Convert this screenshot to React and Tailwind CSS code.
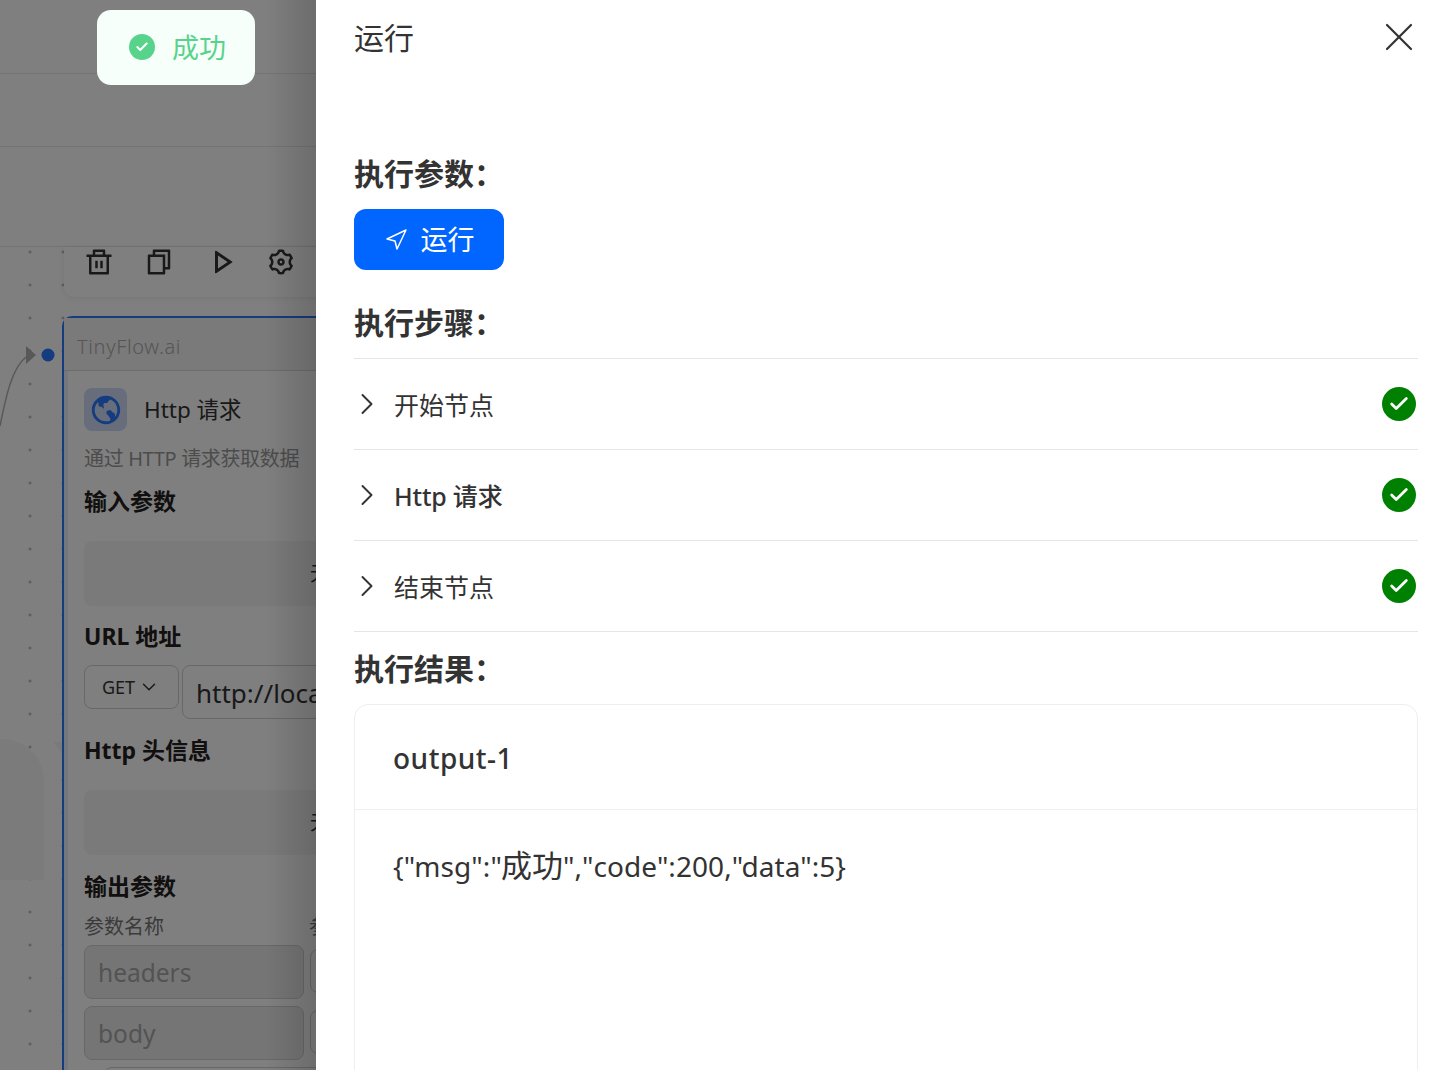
import { X, Navigation, ChevronRight, ChevronDown, Check } from "lucide-react";
import { RiDeleteBinLine, RiFileCopyLine, RiPlayLine, RiSettings3Line, RiEarthLine } from "react-icons/ri";

const fontStack = "font-['Noto_Sans','Noto_Sans_CJK_SC',sans-serif]";

const steps = [
  { name: "开始节点", weight: "" },
  { name: "Http 请求", weight: "font-medium tracking-[-0.2px]" },
  { name: "结束节点", weight: "" },
];

function FieldTitle({ children }) {
  return <div className="pt-[1px] h-[30px] text-[30px] leading-[30px] font-bold text-[#333]">{children}</div>;
}

function NodeLabel({ children, className }) {
  return <div className={`text-[23px] leading-[30px] font-bold text-[#24201c] ${className}`}>{children}</div>;
}

function EmptyBox() {
  return (
    <div className="h-[65px] w-[500px] rounded-[8px] bg-[#f5f5f5] flex items-center pl-[226px] text-[20px] text-[#333]">无</div>
  );
}

function Canvas() {
  return (
    <div className="relative w-[316px] h-[1070px] shrink-0 overflow-hidden bg-white">
      <div className="h-[74px] border-b border-[#e8e8e8]" />
      <div className="h-[73px] border-b border-[#e8e8e8]" />
      <div className="h-[100px] border-b border-[#e8e8e8]" />
      <div className="absolute left-0 right-0 top-[247px] bottom-0 bg-[#fefefe] bg-[radial-gradient(circle,#a6a6a6_1px,transparent_1.2px)] bg-[size:33px_33px] bg-[position:13.5px_-11.5px]" />

      <div className="absolute left-0 top-[739px] w-[44px] h-[141px] rounded-tr-[42px] bg-[#f7f7f8]" />
      <svg className="absolute left-[54px] top-[741px]" width="12" height="20" viewBox="0 0 12 20">
        <path d="M0 1H12V20Z" fill="#f3f4f6" />
      </svg>
      <svg className="absolute left-0 top-[340px]" width="60" height="100" viewBox="0 0 60 100" fill="none">
        <path d="M0 86C6 56 12 28 26 17" stroke="#b1b1b1" strokeWidth="1.5" />
        <path d="M26 6L36 15L26 24Z" fill="#b1b1b1" />
        <circle cx="48" cy="15" r="6.5" fill="#2878ff" />
      </svg>

      <div className="absolute left-[64px] top-[247px] w-[300px] h-[50px] rounded-b-[10px] bg-white shadow-[0_1px_6px_rgba(0,0,0,0.08)] flex items-start pl-[20px] text-[#333]">
        <RiDeleteBinLine size={30} />
        <RiFileCopyLine size={30} className="ml-[30px]" />
        <RiPlayLine size={36} className="ml-[29px] -mt-[3px]" />
        <RiSettings3Line size={30} className="ml-[27px]" />
      </div>

      <div className="absolute left-[62px] top-[316px] w-[500px] h-[800px] rounded-tl-[10px] border-2 border-[#2878ff] bg-white shadow-[inset_4px_4px_0_rgba(37,99,235,0.1)]">
        <div className="h-[53px] border-b border-[#d8d8d8] bg-[#f4f5f7] pl-[13px] pt-[15px] text-[20px] leading-[28px] font-light tracking-[0.65px] text-[#b0aaa8]">
          TinyFlow.ai
        </div>
        <div className="pl-[20px]">
          <div className="flex items-center gap-[17px] mt-[17px]">
            <div className="w-[43px] h-[43px] rounded-[8px] bg-[#cfdbf5] flex items-center justify-center text-[#2878ff]">
              <RiEarthLine size={34} />
            </div>
            <div className="text-[22.5px] leading-[30px] mt-[1px] text-[#333]">Http 请求</div>
          </div>
          <div className="mt-[14px] text-[20px] leading-[28px] tracking-[-0.35px] text-[#999]">通过 HTTP 请求获取数据</div>
          <NodeLabel className="mt-[13px]">输入参数</NodeLabel>
          <div className="mt-[25px]"><EmptyBox /></div>
          <NodeLabel className="mt-[15px]">URL 地址</NodeLabel>
          <div className="flex gap-[3px] mt-[14px] items-start">
            <div className="w-[95px] h-[44px] rounded-[8px] border border-[#d0d0d0] flex items-center pl-[17px] gap-[3px] text-[18px] text-[#333]">
              GET <ChevronDown size={22} strokeWidth={1.6} />
            </div>
            <div className="w-[300px] h-[54px] rounded-[8px] border border-[#d0d0d0] pl-[13px] pt-[9px] text-[26px] leading-[36px] text-[#333]">http://localhost</div>
          </div>
          <NodeLabel className="mt-[16px]">Http 头信息</NodeLabel>
          <div className="mt-[25px]"><EmptyBox /></div>
          <NodeLabel className="mt-[16px]">输出参数</NodeLabel>
          <div className="mt-[12px] text-[20px] leading-[28px] text-[#777] flex">
            <div className="w-[225px]">参数名称</div>
            <div>参数类型</div>
          </div>
          <div className="mt-[4px] flex gap-[6px] items-start">
            <div className="w-[220px] h-[54px] rounded-[8px] border border-[#d0d0d0] bg-[#ebebeb] pl-[13px] pt-[9px] text-[24.5px] leading-[36px] text-[#a6a6a6]">headers</div>
            <div className="w-[100px] h-[44px] mt-[4px] rounded-[8px] border border-[#d0d0d0]" />
          </div>
          <div className="mt-[7px] flex gap-[6px] items-start">
            <div className="w-[220px] h-[54px] rounded-[8px] border border-[#d0d0d0] bg-[#ebebeb] pl-[13px] pt-[9px] text-[24.5px] leading-[36px] text-[#a6a6a6]">body</div>
            <div className="w-[100px] h-[44px] mt-[4px] rounded-[8px] border border-[#d0d0d0]" />
          </div>
          <div className="mt-[7px] ml-[20px] w-[300px] h-[44px] rounded-[8px] border border-[#d0d0d0]" />
        </div>
      </div>

      {/* mask over the page */}
      <div className="absolute inset-0 bg-black/50" />
      <div className="absolute top-0 bottom-0 right-0 w-[50px] bg-gradient-to-l from-black/15 to-transparent" />
    </div>
  );
}

function Drawer() {
  return (
    <div className="flex-1 h-[1070px] overflow-hidden bg-white pl-[38px] pr-[22px] text-[#333]">
      <div className="flex justify-between items-start h-[142px]">
        <div className="mt-[19px] text-[30px] leading-[38px] text-[#333]">运行</div>
        <X size={48} strokeWidth={1.1} className="mt-[13px] -mr-[5px] text-[#333]" />
      </div>
      <div className="mt-[16px]"><FieldTitle>执行参数：</FieldTitle></div>
      <div className="mt-[21px] w-[150px] h-[61px] rounded-[12px] bg-[#0066ff] text-white flex items-center justify-center gap-[13px] text-[27px]">
        <Navigation size={24} strokeWidth={1.5} />
        <span className="mt-[2px]">运行</span>
      </div>
      <div className="mt-[37px]"><FieldTitle>执行步骤：</FieldTitle></div>
      <div className="mt-[21px] border-b border-[#e6e6e6]">
        {steps.map((s) => (
          <div key={s.name} className="h-[91px] border-t border-[#e6e6e6] flex items-center pr-[2px]">
            <ChevronRight size={36} strokeWidth={1.3} className="-ml-[5px] text-[#333]" />
            <div className={`ml-[9px] mt-[2px] text-[25px] leading-[34px] text-[#333] ${s.weight}`}>{s.name}</div>
            <div className="ml-auto w-[34px] h-[34px] rounded-full bg-[#008000] flex items-center justify-center text-white">
              <Check size={22} strokeWidth={3} />
            </div>
          </div>
        ))}
      </div>
      <div className="mt-[21px]"><FieldTitle>执行结果：</FieldTitle></div>
      <div className="mt-[21px] h-[500px] rounded-t-[14px] border border-[#eee]">
        <div className="h-[105px] border-b border-[#eee] pl-[38px] pt-[35px] text-[28px] leading-[36px] font-medium tracking-[0.5px] text-[#333]">output-1</div>
        <div className="pl-[38px] pt-[36px] text-[28px] leading-[38px] tracking-[0.06px] text-[#333]">
          {'{"msg":"'}<span className="text-[31px] -ml-[1px]">成功</span>{'","code":200,"data":5}'}
        </div>
      </div>
    </div>
  );
}

export default function App() {
  return (
    <div className={`relative flex w-[1440px] h-[1070px] overflow-hidden ${fontStack}`}>
      <Canvas />
      <Drawer />
      <div className="absolute left-[97px] top-[10px] w-[158px] h-[75px] rounded-[14px] bg-[#f6fff9] flex items-center pl-[32px] gap-[17px]">
        <div className="w-[26px] h-[26px] mb-[1px] rounded-full bg-[#57d38c] flex items-center justify-center text-white">
          <Check size={14} strokeWidth={3.5} />
        </div>
        <span className="mt-[1px] text-[27px] leading-[36px] text-[#57d38c]">成功</span>
      </div>
    </div>
  );
}
